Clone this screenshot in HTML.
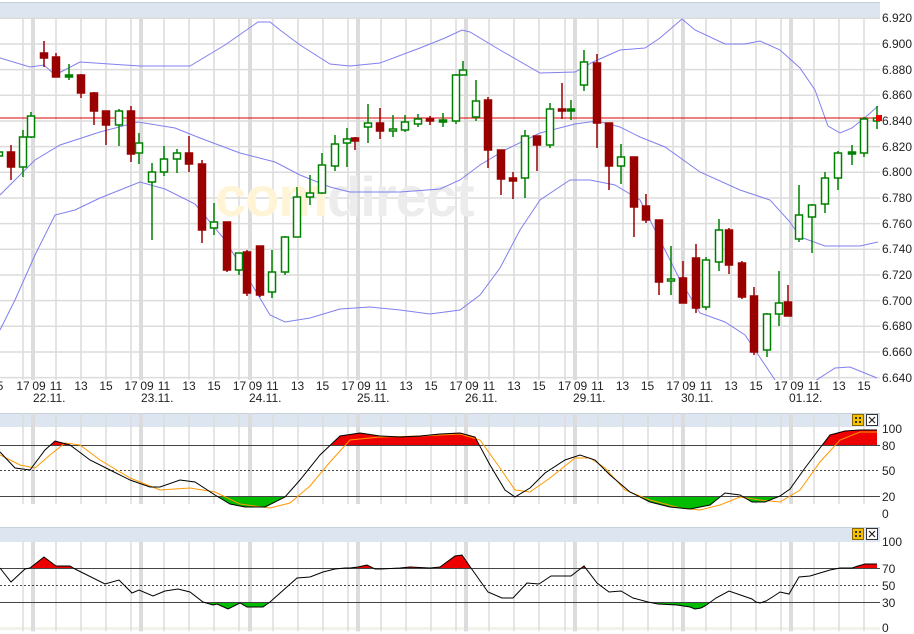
<!DOCTYPE html>
<html><head><meta charset="utf-8"><style>
html,body{margin:0;padding:0;background:#fff;width:914px;height:634px;overflow:hidden}
svg{display:block;font-family:"Liberation Sans",sans-serif}
</style></head><body>
<svg width="914" height="634" viewBox="0 0 914 634" xmlns="http://www.w3.org/2000/svg">
<defs>
<clipPath id="main"><rect x="0" y="18" width="880" height="362"/></clipPath>
<clipPath id="ob1"><rect x="0" y="427" width="880" height="18"/></clipPath>
<clipPath id="os1"><rect x="0" y="496" width="880" height="20"/></clipPath>
<clipPath id="ob2"><rect x="0" y="541" width="880" height="27"/></clipPath>
<clipPath id="os2"><rect x="0" y="602" width="880" height="25"/></clipPath>
</defs>
<rect x="0" y="2" width="880" height="16" fill="#dde6f0"/>
<line x1="0" y1="2.5" x2="880" y2="2.5" stroke="#c8d0da"/>
<rect x="0" y="413" width="880" height="14" fill="#dde6f0"/>
<line x1="0" y1="413.5" x2="880" y2="413.5" stroke="#c8d0da"/>
<rect x="0" y="527" width="880" height="15" fill="#dde6f0"/>
<line x1="0" y1="527.5" x2="880" y2="527.5" stroke="#c8d0da"/>
<rect x="0" y="627" width="880" height="3" fill="#f2f4ea"/>

<g stroke="#dcdcdc" stroke-width="1.5">
<g id="vg">
<line x1="-2" y1="18" x2="-2" y2="380"/><line x1="23" y1="18" x2="23" y2="380"/><line x1="56" y1="18" x2="56" y2="380"/><line x1="81" y1="18" x2="81" y2="380"/><line x1="106" y1="18" x2="106" y2="380"/>
<line x1="131" y1="18" x2="131" y2="380"/><line x1="164" y1="18" x2="164" y2="380"/><line x1="189" y1="18" x2="189" y2="380"/><line x1="214" y1="18" x2="214" y2="380"/>
<line x1="239" y1="18" x2="239" y2="380"/><line x1="273" y1="18" x2="273" y2="380"/><line x1="298" y1="18" x2="298" y2="380"/><line x1="323" y1="18" x2="323" y2="380"/>
<line x1="348" y1="18" x2="348" y2="380"/><line x1="381" y1="18" x2="381" y2="380"/><line x1="406" y1="18" x2="406" y2="380"/><line x1="431" y1="18" x2="431" y2="380"/>
<line x1="456" y1="18" x2="456" y2="380"/><line x1="489" y1="18" x2="489" y2="380"/><line x1="514" y1="18" x2="514" y2="380"/><line x1="539" y1="18" x2="539" y2="380"/>
<line x1="565" y1="18" x2="565" y2="380"/><line x1="598" y1="18" x2="598" y2="380"/><line x1="623" y1="18" x2="623" y2="380"/><line x1="648" y1="18" x2="648" y2="380"/>
<line x1="673" y1="18" x2="673" y2="380"/><line x1="706" y1="18" x2="706" y2="380"/><line x1="731" y1="18" x2="731" y2="380"/><line x1="756" y1="18" x2="756" y2="380"/>
<line x1="781" y1="18" x2="781" y2="380"/><line x1="814" y1="18" x2="814" y2="380"/><line x1="839" y1="18" x2="839" y2="380"/><line x1="864" y1="18" x2="864" y2="380"/>
</g>
<use href="#vg" transform="translate(0,409) scale(1,0.25)"/>
<use href="#vg" transform="translate(0,537.5) scale(1,0.247)"/>
</g>
<g stroke="#dcdcdc" stroke-width="4">
<g id="vt">
<line x1="33" y1="18" x2="33" y2="380"/><line x1="141" y1="18" x2="141" y2="380"/><line x1="250" y1="18" x2="250" y2="380"/><line x1="358" y1="18" x2="358" y2="380"/>
<line x1="466" y1="18" x2="466" y2="380"/><line x1="575" y1="18" x2="575" y2="380"/><line x1="683" y1="18" x2="683" y2="380"/><line x1="791" y1="18" x2="791" y2="380"/>
</g>
<use href="#vt" transform="translate(0,409) scale(1,0.25)"/>
<use href="#vt" transform="translate(0,537.5) scale(1,0.247)"/>
</g>
<g stroke="#dcdcdc" stroke-width="1.5">
<line x1="0" y1="18.3" x2="880" y2="18.3"/><line x1="0" y1="44" x2="880" y2="44"/><line x1="0" y1="69.6" x2="880" y2="69.6"/><line x1="0" y1="95.3" x2="880" y2="95.3"/>
<line x1="0" y1="121" x2="880" y2="121"/><line x1="0" y1="146.6" x2="880" y2="146.6"/><line x1="0" y1="172.3" x2="880" y2="172.3"/><line x1="0" y1="198" x2="880" y2="198"/>
<line x1="0" y1="223.6" x2="880" y2="223.6"/><line x1="0" y1="249.3" x2="880" y2="249.3"/><line x1="0" y1="275" x2="880" y2="275"/><line x1="0" y1="300.6" x2="880" y2="300.6"/>
<line x1="0" y1="326.3" x2="880" y2="326.3"/><line x1="0" y1="352" x2="880" y2="352"/><line x1="0" y1="377.6" x2="880" y2="377.6"/>
</g>
<text x="215" y="216" font-size="56" font-weight="bold" letter-spacing="-1"><tspan fill="#fff5d6">com</tspan><tspan fill="#ececec">direct</tspan></text>

<g fill="none" stroke="#8080f0" stroke-width="1" clip-path="url(#main)">
<polyline points="0,58 30,67 44,65 55,75 80,62 140,66 190,66 225,45 245,31 258,22 270,22 280,30 300,45 330,64 350,66 380,63 420,48 445,38 462,30 470,32 500,50 540,73 575,72 593,62 620,50 645,48 660,38 682,19 695,30 725,44 745,44 760,41 780,50 800,68 815,90 828,126 840,133 852,128 868,115 878,106"/>
<polyline points="0,195 15,180 35,160 60,145 100,132 138,122 175,128 200,138 240,153 275,162 300,175 330,187 350,192 400,192 440,189 460,180 480,165 505,150 540,133 575,124 597,121 620,127 640,137 665,147 700,172 740,190 770,200 790,222 800,237 825,246 860,246 878,242"/>
<polyline points="0,330 15,300 35,255 55,215 75,210 100,198 140,182 165,189 195,204 225,240 245,273 270,315 285,322 310,318 340,309 370,307 400,310 430,314 460,310 480,295 500,268 520,230 540,200 570,180 590,180 615,185 640,200 660,240 680,280 700,313 725,322 745,335 765,365 785,395 800,390 815,381 835,368 850,367 877,378"/>
</g>
<line x1="0" y1="118" x2="880" y2="118" stroke="#dd0000" stroke-width="1"/>

<g stroke-width="1.5">
<g stroke="#990000" fill="#990000">
<line x1="11" y1="145" x2="11" y2="180"/><rect x="7.5" y="152" width="7" height="15"/>
<line x1="44" y1="41" x2="44" y2="67"/><rect x="40.5" y="53" width="7" height="5"/>
<line x1="56" y1="53" x2="56" y2="77"/><rect x="52.5" y="57" width="7" height="20"/>
<line x1="81" y1="74" x2="81" y2="98"/><rect x="77.5" y="75" width="7" height="18"/>
<line x1="94" y1="92" x2="94" y2="125"/><rect x="90.5" y="93" width="7" height="18"/>
<line x1="106" y1="111" x2="106" y2="145"/><rect x="102.5" y="111" width="7" height="14"/>
<line x1="131" y1="106" x2="131" y2="162"/><rect x="127.5" y="111" width="7" height="43"/>
<line x1="189" y1="136" x2="189" y2="172"/><rect x="185.5" y="153" width="7" height="11"/>
<line x1="202" y1="160" x2="202" y2="243"/><rect x="198.5" y="164" width="7" height="66"/>
<line x1="227" y1="222" x2="227" y2="272"/><rect x="223.5" y="222" width="7" height="48"/>
<line x1="247" y1="250" x2="247" y2="296"/><rect x="243.5" y="252" width="7" height="41"/>
<line x1="260" y1="246" x2="260" y2="297"/><rect x="256.5" y="246" width="7" height="49"/>
<line x1="355" y1="137" x2="355" y2="150"/><rect x="351.5" y="138" width="7" height="3"/>
<line x1="380" y1="108" x2="380" y2="139"/><rect x="376.5" y="123" width="7" height="8"/>
<line x1="430" y1="116" x2="430" y2="125"/><rect x="426.5" y="119" width="7" height="2"/>
<line x1="488" y1="97" x2="488" y2="168"/><rect x="484.5" y="100" width="7" height="50"/>
<line x1="501" y1="150" x2="501" y2="195"/><rect x="497.5" y="150" width="7" height="29"/>
<line x1="513" y1="172" x2="513" y2="199"/><rect x="509.5" y="178" width="7" height="3"/>
<line x1="537" y1="136" x2="537" y2="171"/><rect x="533.5" y="136" width="7" height="9"/>
<line x1="562" y1="83" x2="562" y2="119"/><rect x="558.5" y="109" width="7" height="2"/>
<line x1="597" y1="54" x2="597" y2="148"/><rect x="593.5" y="63" width="7" height="60"/>
<line x1="609" y1="123" x2="609" y2="190"/><rect x="605.5" y="123" width="7" height="43"/>
<line x1="634" y1="157" x2="634" y2="237"/><rect x="630.5" y="157" width="7" height="50"/>
<line x1="646" y1="194" x2="646" y2="223"/><rect x="642.5" y="206" width="7" height="14"/>
<line x1="659" y1="220" x2="659" y2="295"/><rect x="655.5" y="220" width="7" height="62"/>
<line x1="683" y1="261" x2="683" y2="303"/><rect x="679.5" y="278" width="7" height="25"/>
<line x1="696" y1="244" x2="696" y2="313"/><rect x="692.5" y="258" width="7" height="50"/>
<line x1="729" y1="228" x2="729" y2="274"/><rect x="725.5" y="230" width="7" height="35"/>
<line x1="742" y1="261" x2="742" y2="299"/><rect x="738.5" y="263" width="7" height="34"/>
<line x1="754" y1="287" x2="754" y2="355"/><rect x="750.5" y="296" width="7" height="56"/>
<line x1="788" y1="285" x2="788" y2="316"/><rect x="784.5" y="302" width="7" height="14"/>
</g>
<g stroke="#008000" fill="#fff">
<line x1="-1" y1="148" x2="-1" y2="160"/><rect x="-4.5" y="152" width="7" height="4"/>
<line x1="23" y1="130" x2="23" y2="177"/><rect x="19.5" y="137" width="7" height="30"/>
<line x1="31" y1="112" x2="31" y2="138"/><rect x="27.5" y="116" width="7" height="21"/>
<line x1="69" y1="64" x2="69" y2="80"/><rect x="65.5" y="75" width="7" height="2" fill="#008000"/>
<line x1="119" y1="109" x2="119" y2="146"/><rect x="115.5" y="111" width="7" height="14"/>
<line x1="139" y1="133" x2="139" y2="164"/><rect x="135.5" y="143" width="7" height="10"/>
<line x1="152" y1="163" x2="152" y2="240"/><rect x="148.5" y="172" width="7" height="10"/>
<line x1="164" y1="146" x2="164" y2="176"/><rect x="160.5" y="159" width="7" height="13"/>
<line x1="177" y1="149" x2="177" y2="173"/><rect x="173.5" y="153" width="7" height="6"/>
<line x1="214" y1="203" x2="214" y2="235"/><rect x="210.5" y="222" width="7" height="6"/>
<line x1="239" y1="253" x2="239" y2="275"/><rect x="235.5" y="253" width="7" height="17"/>
<line x1="272" y1="250" x2="272" y2="298"/><rect x="268.5" y="272" width="7" height="20"/>
<line x1="285" y1="236" x2="285" y2="275"/><rect x="281.5" y="237" width="7" height="35"/>
<line x1="297" y1="187" x2="297" y2="237"/><rect x="293.5" y="197" width="7" height="40"/>
<line x1="310" y1="175" x2="310" y2="205"/><rect x="306.5" y="193" width="7" height="4"/>
<line x1="322" y1="153" x2="322" y2="194"/><rect x="318.5" y="165" width="7" height="28"/>
<line x1="335" y1="135" x2="335" y2="171"/><rect x="331.5" y="144" width="7" height="22"/>
<line x1="347" y1="128" x2="347" y2="167"/><rect x="343.5" y="139" width="7" height="4"/>
<line x1="368" y1="104" x2="368" y2="143"/><rect x="364.5" y="123" width="7" height="4"/>
<line x1="393" y1="115" x2="393" y2="137"/><rect x="389.5" y="129" width="7" height="2"/>
<line x1="405" y1="115" x2="405" y2="132"/><rect x="401.5" y="122" width="7" height="8"/>
<line x1="418" y1="114" x2="418" y2="127"/><rect x="414.5" y="119" width="7" height="5"/>
<line x1="443" y1="113" x2="443" y2="127"/><rect x="439.5" y="120" width="7" height="2" fill="#008000"/>
<line x1="456" y1="74" x2="456" y2="124"/><rect x="452.5" y="75" width="7" height="46"/>
<line x1="463" y1="61" x2="463" y2="75"/><rect x="459.5" y="70" width="7" height="5"/>
<line x1="476" y1="80" x2="476" y2="121"/><rect x="472.5" y="101" width="7" height="16"/>
<line x1="525" y1="130" x2="525" y2="198"/><rect x="521.5" y="136" width="7" height="42"/>
<line x1="550" y1="103" x2="550" y2="148"/><rect x="546.5" y="109" width="7" height="36"/>
<line x1="571" y1="100" x2="571" y2="120"/><rect x="567.5" y="109" width="7" height="2" fill="#008000"/>
<line x1="584" y1="50" x2="584" y2="91"/><rect x="580.5" y="62" width="7" height="23"/>
<line x1="621" y1="144" x2="621" y2="184"/><rect x="617.5" y="157" width="7" height="9"/>
<line x1="671" y1="246" x2="671" y2="295"/><rect x="667.5" y="279" width="7" height="2"/>
<line x1="706" y1="257" x2="706" y2="310"/><rect x="702.5" y="260" width="7" height="47"/>
<line x1="719" y1="219" x2="719" y2="271"/><rect x="715.5" y="230" width="7" height="32"/>
<line x1="767" y1="313" x2="767" y2="357"/><rect x="763.5" y="314" width="7" height="36"/>
<line x1="779" y1="271" x2="779" y2="326"/><rect x="775.5" y="303" width="7" height="11"/>
<line x1="799" y1="185" x2="799" y2="242"/><rect x="795.5" y="215" width="7" height="24"/>
<line x1="812" y1="204" x2="812" y2="253"/><rect x="808.5" y="205" width="7" height="12"/>
<line x1="825" y1="172" x2="825" y2="213"/><rect x="821.5" y="178" width="7" height="26"/>
<line x1="838" y1="151" x2="838" y2="190"/><rect x="834.5" y="153" width="7" height="25"/>
<line x1="852" y1="145" x2="852" y2="165"/><rect x="848.5" y="152" width="7" height="2" fill="#008000"/>
<line x1="864" y1="117" x2="864" y2="157"/><rect x="860.5" y="119" width="7" height="34"/>
<line x1="877" y1="106" x2="877" y2="129"/><rect x="873.5" y="118" width="6" height="3"/>
</g>
</g>
<rect x="876" y="115" width="6" height="6" fill="#ee0000"/>

<g font-size="12" fill="#222">
<text x="882" y="22">6.920</text><text x="882" y="48">6.900</text><text x="882" y="74">6.880</text><text x="882" y="99">6.860</text>
<text x="882" y="125">6.840</text><text x="882" y="151">6.820</text><text x="882" y="176">6.800</text><text x="882" y="202">6.780</text>
<text x="882" y="228">6.760</text><text x="882" y="253">6.740</text><text x="882" y="279">6.720</text><text x="882" y="305">6.700</text>
<text x="882" y="330">6.680</text><text x="882" y="356">6.660</text><text x="882" y="382">6.640</text>
</g>
<g font-size="12" fill="#222" text-anchor="middle">
<g id="tl"><text x="23" y="390">17</text><text x="39" y="390">09</text><text x="56" y="390">11</text><text x="81" y="390">13</text><text x="106" y="390">15</text></g>
<use href="#tl" transform="translate(108,0)"/><use href="#tl" transform="translate(216.5,0)"/><use href="#tl" transform="translate(325,0)"/>
<use href="#tl" transform="translate(433,0)"/><use href="#tl" transform="translate(541.5,0)"/><use href="#tl" transform="translate(650,0)"/><use href="#tl" transform="translate(758,0)"/>
<text x="0" y="390">5</text>
</g>
<g font-size="12" fill="#222">
<text x="33" y="402">22.11.</text><text x="141" y="402">23.11.</text><text x="249" y="402">24.11.</text><text x="357" y="402">25.11.</text>
<text x="465" y="402">26.11.</text><text x="573" y="402">29.11.</text><text x="681" y="402">30.11.</text><text x="789" y="402">01.12.</text>
</g>

<g>
<rect x="852.5" y="414.5" width="11" height="11" fill="#f5c000" stroke="#886600"/>
<rect x="855" y="417" width="2" height="2" fill="#333"/><rect x="859" y="417" width="2" height="2" fill="#333"/><rect x="855" y="421" width="2" height="2" fill="#333"/><rect x="859" y="421" width="2" height="2" fill="#333"/>
<rect x="866.5" y="414.5" width="11" height="11" fill="#fff" stroke="#333"/>
<path d="M869 417 L875 423 M875 417 L869 423" stroke="#222" stroke-width="1.2"/>
<rect x="852.5" y="528.5" width="11" height="11" fill="#f5c000" stroke="#886600"/>
<rect x="855" y="531" width="2" height="2" fill="#333"/><rect x="859" y="531" width="2" height="2" fill="#333"/><rect x="855" y="535" width="2" height="2" fill="#333"/><rect x="859" y="535" width="2" height="2" fill="#333"/>
<rect x="866.5" y="528.5" width="11" height="11" fill="#fff" stroke="#333"/>
<path d="M869 531 L875 537 M875 531 L869 537" stroke="#222" stroke-width="1.2"/>
</g>

<g clip-path="url(#ob1)"><polygon fill="#ee0000" points="0,452 15,468 30,470 45,450 55,441 70,445 90,460 110,470 130,480 150,487 160,487 180,480 195,482 215,495 230,504 245,507 265,507 285,497 300,480 320,455 340,436 360,433 380,436 400,437 420,436 440,434 460,433 475,437 490,465 505,490 515,497 530,488 545,473 565,460 580,455 595,460 610,475 630,492 650,502 670,507 690,509 710,505 725,493 740,495 752,502 765,502 780,496 790,489 805,468 820,448 830,435 845,431 860,430 877,430 877,445 0,445"/></g>
<g clip-path="url(#os1)"><polygon fill="#00bb00" points="0,452 15,468 30,470 45,450 55,441 70,445 90,460 110,470 130,480 150,487 160,487 180,480 195,482 215,495 230,504 245,507 265,507 285,497 300,480 320,455 340,436 360,433 380,436 400,437 420,436 440,434 460,433 475,437 490,465 505,490 515,497 530,488 545,473 565,460 580,455 595,460 610,475 630,492 650,502 670,507 690,509 710,505 725,493 740,495 752,502 765,502 780,496 790,489 805,468 820,448 830,435 845,431 860,430 877,430 877,496 0,496"/></g>
<line x1="0" y1="445.5" x2="880" y2="445.5" stroke="#444"/>
<line x1="0" y1="496.5" x2="880" y2="496.5" stroke="#444"/>
<line x1="0" y1="470.5" x2="880" y2="470.5" stroke="#444" stroke-dasharray="2,2"/>
<polyline fill="none" stroke="#ff9900" stroke-width="1" points="0,455 20,465 35,468 50,455 65,443 80,445 100,460 130,478 160,490 190,488 215,492 240,504 270,508 290,503 310,486 330,462 350,440 380,437 420,436 460,434 480,440 500,468 515,490 530,492 550,478 575,458 590,458 605,468 625,490 650,500 680,508 700,510 720,505 740,497 760,500 780,502 800,490 820,462 840,440 860,432 877,432"/>
<polyline fill="none" stroke="#000" stroke-width="1" points="0,452 15,468 30,470 45,450 55,441 70,445 90,460 110,470 130,480 150,487 160,487 180,480 195,482 215,495 230,504 245,507 265,507 285,497 300,480 320,455 340,436 360,433 380,436 400,437 420,436 440,434 460,433 475,437 490,465 505,490 515,497 530,488 545,473 565,460 580,455 595,460 610,475 630,492 650,502 670,507 690,509 710,505 725,493 740,495 752,502 765,502 780,496 790,489 805,468 820,448 830,435 845,431 860,430 877,430"/>
<g font-size="12" fill="#222">
<text x="882" y="433">100</text><text x="882" y="450">80</text><text x="882" y="475">50</text><text x="882" y="501">20</text><text x="882" y="518">0</text>
</g>

<g clip-path="url(#ob2)"><polygon fill="#ee0000" points="0,568 11,582 25,569 30,568 44,557 56,566 70,566 75,569 105,584 119,580 132,593 139,590 153,596 165,591 178,589 190,592 203,602 213,605 217,604 228,609 240,603 247,607 263,607 270,602 297,578 310,577 323,572 335,569 345,568 350,568 358,567 367,565 375,569 380,569 400,568 410,567 430,568 440,567 455,556 462,555 471,568 488,592 502,598 513,598 527,583 539,584 551,576 571,576 584,566 597,583 609,592 621,591 633,598 648,602 658,604 677,605 690,607 695,609 701,608 705,606 716,598 729,591 752,599 756,602 760,603 766,601 774,596 780,592 789,594 799,577 810,576 820,573 830,570 840,568 852,568 858,566 865,564 877,564 877,568 0,568"/></g>
<g clip-path="url(#os2)"><polygon fill="#00bb00" points="0,568 11,582 25,569 30,568 44,557 56,566 70,566 75,569 105,584 119,580 132,593 139,590 153,596 165,591 178,589 190,592 203,602 213,605 217,604 228,609 240,603 247,607 263,607 270,602 297,578 310,577 323,572 335,569 345,568 350,568 358,567 367,565 375,569 380,569 400,568 410,567 430,568 440,567 455,556 462,555 471,568 488,592 502,598 513,598 527,583 539,584 551,576 571,576 584,566 597,583 609,592 621,591 633,598 648,602 658,604 677,605 690,607 695,609 701,608 705,606 716,598 729,591 752,599 756,602 760,603 766,601 774,596 780,592 789,594 799,577 810,576 820,573 830,570 840,568 852,568 858,566 865,564 877,564 877,602 0,602"/></g>
<line x1="0" y1="568.5" x2="880" y2="568.5" stroke="#444"/>
<line x1="0" y1="602.5" x2="880" y2="602.5" stroke="#444"/>
<line x1="0" y1="585.5" x2="880" y2="585.5" stroke="#444" stroke-dasharray="2,2"/>
<polyline fill="none" stroke="#000" stroke-width="1" points="0,568 11,582 25,569 30,568 44,557 56,566 70,566 75,569 105,584 119,580 132,593 139,590 153,596 165,591 178,589 190,592 203,602 213,605 217,604 228,609 240,603 247,607 263,607 270,602 297,578 310,577 323,572 335,569 345,568 350,568 358,567 367,565 375,569 380,569 400,568 410,567 430,568 440,567 455,556 462,555 471,568 488,592 502,598 513,598 527,583 539,584 551,576 571,576 584,566 597,583 609,592 621,591 633,598 648,602 658,604 677,605 690,607 695,609 701,608 705,606 716,598 729,591 752,599 756,602 760,603 766,601 774,596 780,592 789,594 799,577 810,576 820,573 830,570 840,568 852,568 858,566 865,564 877,564"/>
<g font-size="12" fill="#222">
<text x="882" y="546">100</text><text x="882" y="573">70</text><text x="882" y="590">50</text><text x="882" y="607">30</text><text x="882" y="632">0</text>
</g>
</svg>
</body></html>
